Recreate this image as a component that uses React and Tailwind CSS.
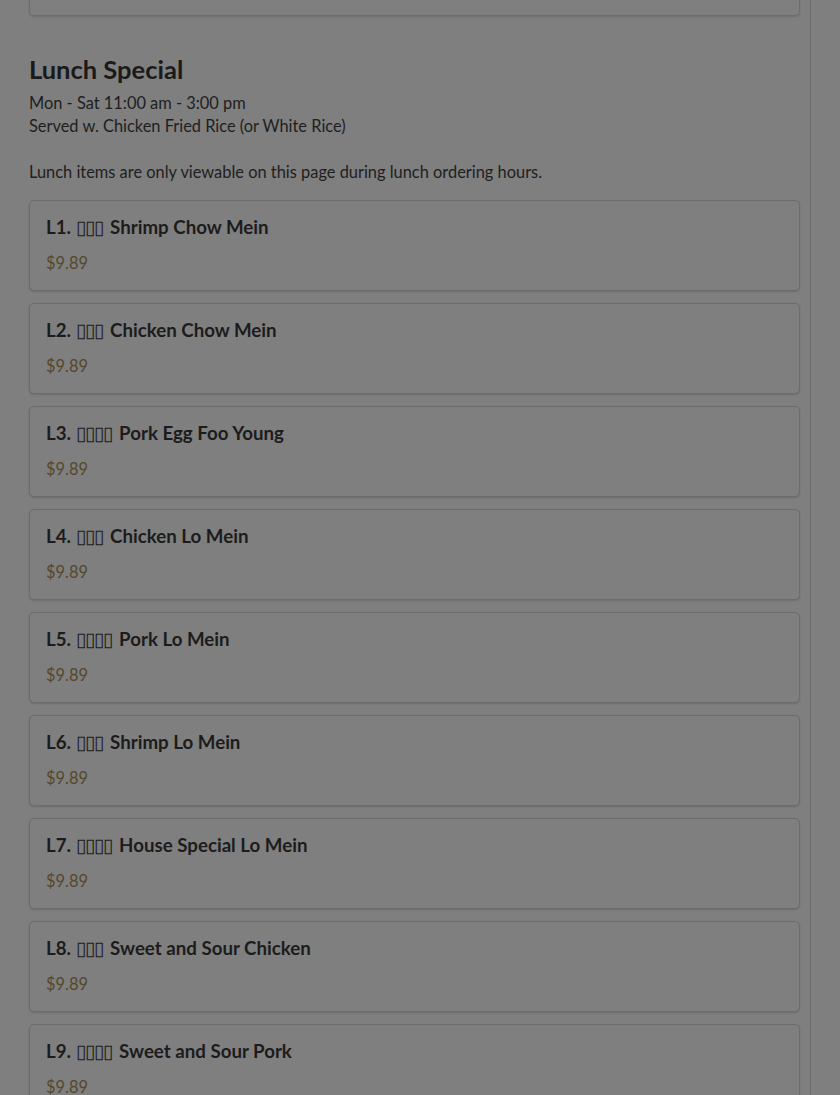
const items = [
  { code: 'L1.', zh: '▯▯▯', name: 'Shrimp Chow Mein' },
  { code: 'L2.', zh: '▯▯▯', name: 'Chicken Chow Mein' },
  { code: 'L3.', zh: '▯▯▯▯', name: 'Pork Egg Foo Young' },
  { code: 'L4.', zh: '▯▯▯', name: 'Chicken Lo Mein' },
  { code: 'L5.', zh: '▯▯▯▯', name: 'Pork Lo Mein' },
  { code: 'L6.', zh: '▯▯▯', name: 'Shrimp Lo Mein' },
  { code: 'L7.', zh: '▯▯▯▯', name: 'House Special Lo Mein' },
  { code: 'L8.', zh: '▯▯▯', name: 'Sweet and Sour Chicken' },
  { code: 'L9.', zh: '▯▯▯▯', name: 'Sweet and Sour Pork' },
];

const MenuCard = ({ item }) => (
  <div className="rounded-[5px] border border-[#6c6c6c] bg-[#7f7f7f] shadow-[0_1px_2px_rgba(0,0,0,0.15)] px-4 pt-[14px] h-[91px]">
    <h3 className="text-[18.7px] leading-[24px] font-bold text-[#1c1c1c]">
      {item.code} <span className="font-normal tracking-[-1px] mr-[3px]">{item.zh}</span> {item.name}
    </h3>
    <p className="mt-[14px] text-[16.4px] leading-[20px] text-[#54482c]">$9.89</p>
  </div>
);

export default function App() {
  return (
    <div className="h-[1095px] overflow-hidden bg-[#7f7f7f] font-['Lato','Noto_Sans',sans-serif]">
      <div className="w-[811px] h-full border-r border-[#6b6b6b] pl-[29px] pr-[10px]">
        {/* previous section card, cut off at top */}
        <div className="h-[16px] rounded-b-[5px] border border-t-0 border-[#6c6c6c] shadow-[0_1px_2px_rgba(0,0,0,0.15)]" />

        {/* Lunch Special */}
        <section className="pt-[37px]">
          <h2 className="text-[25.5px] leading-[32px] font-bold text-[#1a1a1a]">Lunch Special</h2>
          <p className="mt-[6px] text-[16.4px] leading-[23px] text-[#1e1e1e]">
            Mon - Sat 11:00 am - 3:00 pm
            <br />
            Served w. Chicken Fried Rice (or White Rice)
            <br />
            <br />
            Lunch items are only viewable on this page during lunch ordering hours.
          </p>

          <div className="mt-[17px] flex flex-col gap-[12px]">
            {items.map((item) => (
              <MenuCard key={item.code} item={item} />
            ))}
          </div>
        </section>
      </div>
    </div>
  );
}
